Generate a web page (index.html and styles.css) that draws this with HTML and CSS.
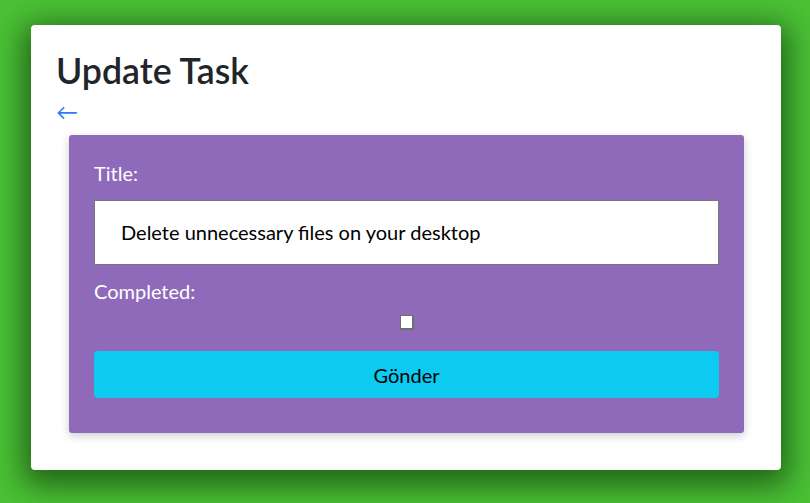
FILE: index.html
```html
<!DOCTYPE html>
<html lang="en">
<head>
<meta charset="utf-8">
<title>Update Task</title>
<link rel="stylesheet" href="styles.css">
</head>
<body>
<main class="card">
  <h1 class="title">Update Task</h1>
  <a class="back" href="#">&larr;</a>
  <form class="panel">
    <label class="label" for="t">Title:</label>
    <div class="input">Delete unnecessary files on your desktop</div>
    <label class="label">Completed:</label>
    <div class="check-row"><span class="check"></span></div>
    <button type="button" class="btn">Gönder</button>
  </form>
</main>
</body>
</html>
```
FILE: styles.css
```css
* { box-sizing: border-box; }
html, body { margin: 0; padding: 0; }
body {
  background: #4bc236;
  font-family: Lato, "Noto Sans", sans-serif;
  color: #212529;
  height: 503px;
  padding-top: 25px;
}
.card {
  width: 750px;
  height: 445px;
  margin: 0 0 0 31px;
  background: #fff;
  border-radius: 4px;
  padding: 25px 25px 0;
  box-shadow: 0 8px 30px 8px rgba(20, 70, 15, 0.75);
}
.title {
  margin: 0 0 8px;
  font-size: 35.7px;
  font-weight: 600;
  line-height: 41px;
}
.back {
  display: block;
  color: #2f7cf6;
  text-decoration: none;
  font-size: 22px;
  line-height: 26px;
  height: 26px;
  width: 20px;
}
.panel {
  width: 675px;
  margin: 10px 0 0 13px;
  background: #8f6abb;
  border-radius: 3px;
  padding: 26px 25px 35px;
  box-shadow: 0 3px 10px rgba(0, 0, 0, 0.2);
}
.label {
  display: block;
  color: #fff;
  font-size: 20px;
  line-height: 24px;
}
.input {
  margin-top: 15px;
  height: 65px;
  background: #fff;
  border: 1px solid #767676;
  padding: 0 26px;
  font-size: 20px;
  line-height: 63px;
  color: #000;
}
.input + .label { margin-top: 14px; }
.check-row {
  display: flex;
  justify-content: center;
  padding: 12px 0 0;
  height: 38px;
}
.check {
  width: 14px;
  height: 15px;
  background: #fff;
  border: 1px solid #6f6f6f;
  border-right-width: 2px;
  border-bottom-width: 2px;
}
.btn {
  display: block;
  width: 100%;
  margin-top: 10px;
  height: 47px;
  border: 0;
  border-radius: 4px;
  background: #0dcaf0;
  color: #000;
  font-family: inherit;
  font-size: 20px;
}
```
